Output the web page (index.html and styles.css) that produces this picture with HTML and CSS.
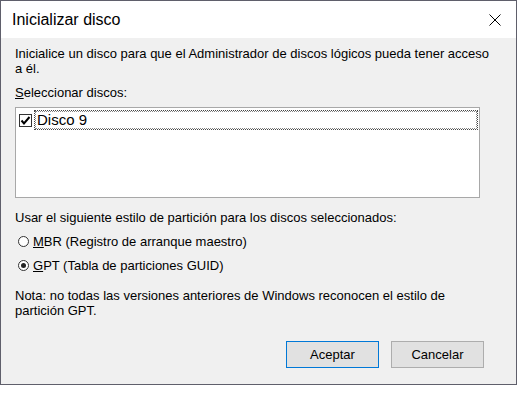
FILE: index.html
```html
<!DOCTYPE html>
<html lang="es">
<head>
    <meta charset="UTF-8">
    <meta name="viewport" content="width=device-width, initial-scale=1.0">
    <title>Inicializar disco</title>
    <link rel="stylesheet" href="styles.css">
</head>
<body>
    <div class="window">
        <div class="title-bar">
            <span class="title">Inicializar disco</span>
            <svg class="close" width="12" height="12" viewBox="0 0 12 12">
                <path d="M0.5 0.5 L11.5 11.5 M11.5 0.5 L0.5 11.5" stroke="#000" stroke-width="1" fill="none"/>
            </svg>
        </div>
        <div class="content">
            <p class="intro">Inicialice un disco para que el Administrador de discos lógicos pueda tener acceso a él.</p>
            <p class="label"><u>S</u>eleccionar discos:</p>
            <div class="disk-list">
                <div class="disk-item">
                    <span class="checkbox">
                        <svg width="11" height="11" viewBox="0 0 11 11">
                            <path d="M1.5 5.5 L4 8.5 L9.5 2" stroke="#000" stroke-width="2" fill="none"/>
                        </svg>
                    </span>
                    <span class="disk-name">Disco 9</span>
                </div>
            </div>
            <p class="label style-label">Usar el siguiente estilo de partición para los discos seleccionados:</p>
            <div class="options">
                <label class="option"><span class="radio"></span><span><u>M</u>BR (Registro de arranque maestro)</span></label>
                <label class="option"><span class="radio checked"></span><span><u>G</u>PT (Tabla de particiones GUID)</span></label>
            </div>
            <p class="note">Nota: no todas las versiones anteriores de Windows reconocen el estilo de partición GPT.</p>
            <div class="buttons">
                <button class="btn btn-default">Aceptar</button>
                <button class="btn">Cancelar</button>
            </div>
        </div>
    </div>
</body>
</html>
```

FILE: styles.css
```css
body {
    margin: 0;
    background: #fff;
    font-family: "Liberation Sans", Arial, sans-serif;
    font-size: 13px;
    color: #000;
}
.window {
    width: 517px;
    height: 385px;
    box-sizing: border-box;
    border: 1px solid #5f5f6b;
    background: #f0f0f0;
    display: flex;
    flex-direction: column;
}
.title-bar {
    height: 37px;
    background: #fff;
    display: flex;
    align-items: center;
    justify-content: space-between;
    padding: 0 15px 0 11px;
}
.title {
    font-size: 16px;
    color: #000;
}
.content {
    flex: 1;
    display: flex;
    flex-direction: column;
    padding: 8px 32px 0 14px;
    line-height: 15px;
}
.content p {
    margin: 0;
}
.intro {
    width: 480px;
}
.label {
    margin-top: 9px !important;
}
.disk-list {
    margin-top: 7px;
    height: 91px;
    width: 465px;
    box-sizing: border-box;
    border: 1px solid #a8a8a8;
    background: #fff;
    padding: 2px 1px 0 3px;
}
.disk-item {
    display: flex;
    align-items: center;
    gap: 2px;
}
.checkbox {
    width: 13px;
    height: 13px;
    box-sizing: border-box;
    border: 1px solid #333;
    display: flex;
    align-items: center;
    justify-content: center;
    background: #fff;
}
.disk-name {
    flex: 1;
    height: 20px;
    box-sizing: border-box;
    border: 1px dotted #444;
    outline: 1px dotted #888;
    outline-offset: -2px;
    font-size: 15px;
    line-height: 17px;
    padding-left: 2px;
}
.style-label {
    margin-top: 12px !important;
}
.options {
    display: flex;
    flex-direction: column;
    gap: 9px;
    margin-top: 9px;
    padding-left: 3px;
}
.option {
    display: flex;
    align-items: center;
    gap: 4px;
}
.radio {
    width: 11px;
    height: 11px;
    box-sizing: border-box;
    border: 1px solid #333;
    border-radius: 50%;
    background: #fff;
    display: flex;
    align-items: center;
    justify-content: center;
}
.radio.checked::after {
    content: "";
    width: 5px;
    height: 5px;
    border-radius: 50%;
    background: #222;
}
.note {
    margin-top: 15px !important;
}
.buttons {
    display: flex;
    justify-content: flex-end;
    gap: 12px;
    margin-top: 23px;
}
.btn {
    width: 93px;
    height: 27px;
    background: #e1e1e1;
    border: 1px solid #adadad;
    font-family: inherit;
    font-size: 13px;
    color: #000;
    padding: 0;
}
.btn-default {
    border-color: #0078d7;
}
```
